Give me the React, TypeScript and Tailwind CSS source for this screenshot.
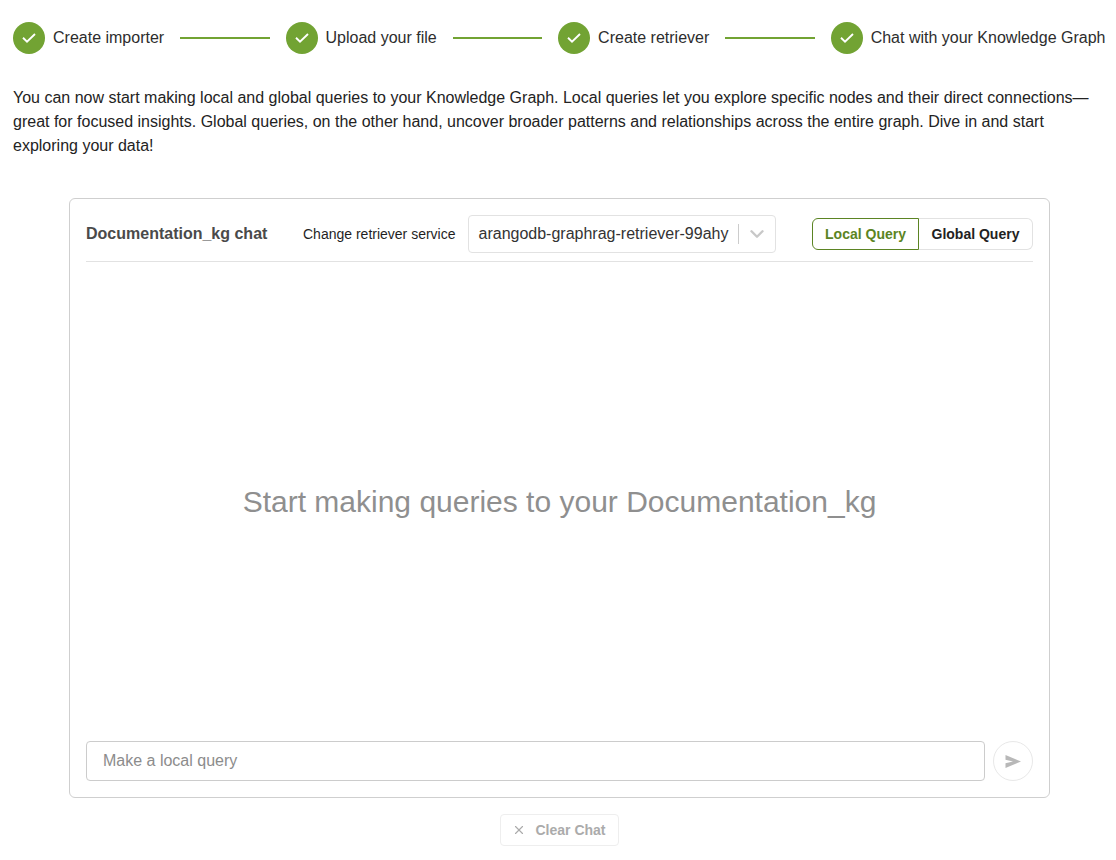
import { ChevronDown, X } from "lucide-react";

const steps = ["Create importer", "Upload your file", "Create retriever", "Chat with your Knowledge Graph"];

function Step({ label, last }: { label: string; last: boolean }) {
  return (
    <>
      <div className="flex items-center shrink-0">
        <div className="w-8 h-8 rounded-full bg-[#72a333] flex items-center justify-center">
          <svg width="14" height="10" viewBox="0 0 14 10" fill="none">
            <path d="M1 4.8 L5 8.6 L13 1" stroke="white" strokeWidth="1.9" />
          </svg>
        </div>
        <span className="ml-2 text-base leading-6 text-[#2d2d2d] whitespace-nowrap">{label}</span>
      </div>
      {!last && <div className="w-[89.4px] h-0.5 bg-[#72a333] mx-4 shrink-0" />}
    </>
  );
}

export default function App() {
  return (
    <div className="w-[1116px] h-[860px] overflow-hidden bg-white font-['Liberation_Sans',sans-serif] text-[#1f1f1f]">
      <div className="flex items-center pl-[13px] pt-[22px]">
        {steps.map((s, i) => (
          <Step key={s} label={s} last={i === steps.length - 1} />
        ))}
      </div>

      <p className="mt-[32px] mx-[13px] text-base leading-6 text-[#232323]">
        You can now start making local and global queries to your Knowledge Graph. Local queries let you explore specific nodes and their direct connections—great for focused insights. Global queries, on the other hand, uncover broader patterns and relationships across the entire graph. Dive in and start exploring your data!
      </p>

      <div className="mt-[40px] ml-[69px] w-[981px] h-[600px] border border-[#cfcfcf] rounded-md px-4 pt-4 pb-4 flex flex-col">
        <div className="flex items-center h-[47px] pb-[9px] border-b border-[#e2e2e2]">
          <span className="w-[217px] text-base font-bold text-[#4a4a4a]">Documentation_kg chat</span>
          <span className="w-[165px] text-sm text-[#1f1f1f]">Change retriever service</span>
          <div className="w-[308px] h-[38px] border border-[#e2e2e2] rounded flex items-center pl-[9.5px]">
            <span className="flex-1 text-base text-[#333333]">arangodb-graphrag-retriever-99ahy</span>
            <span className="w-px h-5 bg-[#cccccc]" />
            <ChevronDown className="w-[22px] h-[22px] mx-[7px] text-[#c8c8c8]" strokeWidth={2.6} />
          </div>
          <div className="ml-9 flex h-8">
            <button className="w-[107px] border border-[#5b8423] rounded-l-md text-sm font-bold text-[#5b8423]">Local Query</button>
            <button className="w-[114px] border border-l-0 border-[#e2e2e2] rounded-r-md text-sm font-bold text-[#222222]">Global Query</button>
          </div>
        </div>

        <div className="flex-1 flex items-center justify-center text-[30px] text-[#8f8f8f]">
          Start making queries to your Documentation_kg
        </div>

        <div className="flex items-center gap-2">
          <div className="flex-1 h-10 border border-[#cccccc] rounded px-4 flex items-center text-base text-[#8c8c8c]">
            Make a local query
          </div>
          <button className="w-10 h-10 rounded-full border border-[#e8e8e8] flex items-center justify-center">
            <svg width="16" height="13" viewBox="0 0 16 13" fill="#b8b8b8">
              <path d="M0.5 0 L16 6.5 L0.5 13 L0.5 8.2 L8 6.5 L0.5 4.8 Z" />
            </svg>
          </button>
        </div>
      </div>

      <div className="mt-4 flex justify-center pl-[2px]">
        <button className="w-[119px] h-8 border border-[#eeeeee] rounded flex items-center justify-center gap-[9px] text-sm font-bold text-[#ababab]">
          <X className="w-3.5 h-3.5" />
          Clear Chat
        </button>
      </div>
    </div>
  );
}
